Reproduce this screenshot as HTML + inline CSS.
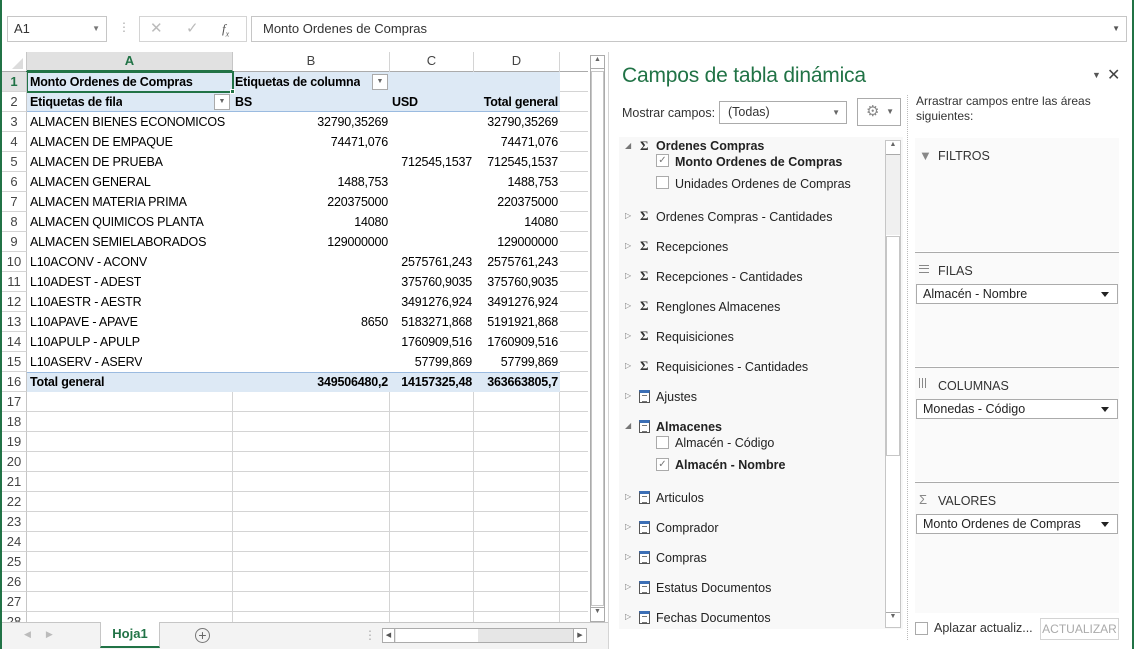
<!DOCTYPE html>
<html><head><meta charset="utf-8"><style>
*{box-sizing:border-box;margin:0;padding:0}
body{width:1134px;height:649px;position:relative;overflow:hidden;background:#fff;font-family:"Liberation Sans",sans-serif;font-size:12.5px;color:#000}
.a{position:absolute}
.c{position:absolute;height:20px;line-height:20px;white-space:nowrap;overflow:hidden;font-size:12.5px;letter-spacing:-0.2px}
.r{text-align:right;padding-right:2px}
.b{font-weight:bold}
.rh{position:absolute;left:0;width:27px;height:20px;line-height:20px;text-align:center;color:#444;font-size:13px;background:#fff;border-bottom:1px solid #d4d4d4;border-right:1px solid #c6c6c6}
.fl{position:absolute;left:640px;font-size:12.5px;color:#222;white-space:nowrap}
.tri{position:absolute;left:625px;font-size:8px;color:#777}
.sig{position:absolute;left:640px;font-size:13px;font-weight:bold;color:#333;font-family:"Liberation Serif",serif}
.doc{position:absolute;left:639px;width:11px;height:13px;border:1px solid #555;border-top:3px solid #3b6fb6;background:#fff}
.doc::after{content:"";position:absolute;left:2px;top:2px;width:5px;height:5px;border-top:1px solid #777;border-bottom:1px solid #777}
.cb{position:absolute;left:656px;width:13px;height:13px;border:1px solid #aaa;background:#fff;font-size:10px;line-height:11px;text-align:center;color:#777}
.ar{position:absolute;left:915px;width:204px;background:#fafafa}
.dd{position:absolute;left:916px;width:202px;height:20px;border:1px solid #ababab;background:#fff;font-size:12.5px;line-height:18px;padding-left:6px;color:#222}
.dd::after{content:"";position:absolute;right:8px;top:7px;border-left:4px solid transparent;border-right:4px solid transparent;border-top:5px solid #222}
.ah{position:absolute;left:938px;font-size:12.5px;color:#333}
</style></head><body>
<div class="a" style="left:0;top:0;width:2px;height:649px;background:#217346"></div>
<div class="a" style="left:1132px;top:0;width:2px;height:649px;background:#217346"></div>
<div class="a" style="left:2px;top:0;width:1130px;height:52px;background:#fff"></div>
<div class="a" style="left:7px;top:16px;width:100px;height:26px;border:1px solid #c6c6c6;font-size:13px;line-height:24px;padding-left:6px;color:#333">A1<span style="position:absolute;right:6px;top:0;font-size:8px;color:#777">▼</span></div>
<div class="a" style="left:118px;top:20px;color:#aaa;font-size:12px">⋮</div>
<div class="a" style="left:139px;top:16px;width:108px;height:26px;border:1px solid #d4d4d4;color:#bbb;font-size:15px;line-height:24px"><span style="position:absolute;left:10px">✕</span><span style="position:absolute;left:46px">✓</span><span style="position:absolute;left:82px;color:#555;font-family:'Liberation Serif',serif;font-style:italic;font-size:13px">f<sub style="font-size:8px">x</sub></span></div>
<div class="a" style="left:251px;top:16px;width:876px;height:26px;border:1px solid #c6c6c6;font-size:13px;line-height:24px;padding-left:11px;color:#333">Monto Ordenes de Compras<span style="position:absolute;right:6px;top:0;font-size:8px;color:#555">▼</span></div>
<div class="a" style="left:2px;top:52px;width:586px;height:20px;background:#fff;border-bottom:1px solid #ababab"></div>
<div class="a" style="left:2px;top:52px;width:25px;height:20px;border-right:1px solid #c6c6c6"></div>
<div class="a" style="left:12px;top:58px;width:0;height:0;border-left:11px solid transparent;border-bottom:11px solid #dcdcdc"></div>
<div class="a" style="left:27px;top:52px;width:206px;height:20px;background:#e1e1e1;border-bottom:2px solid #217346;border-right:1px solid #c6c6c6;text-align:center;line-height:18px;color:#217346;font-weight:bold;font-size:13px">A</div>
<div class="a" style="left:233px;top:52px;width:157px;height:20px;border-right:1px solid #d4d4d4;text-align:center;line-height:18px;color:#444;font-size:13px">B</div>
<div class="a" style="left:390px;top:52px;width:84px;height:20px;border-right:1px solid #d4d4d4;text-align:center;line-height:18px;color:#444;font-size:13px">C</div>
<div class="a" style="left:474px;top:52px;width:86px;height:20px;border-right:1px solid #d4d4d4;text-align:center;line-height:18px;color:#444;font-size:13px">D</div>
<div class="a" style="left:27px;top:72px;width:561px;height:550px;background:
repeating-linear-gradient(to bottom,transparent 0 19px,#d4d4d4 19px 20px),#fff"></div>
<div class="a" style="left:232px;top:392px;width:1px;height:230px;background:#d4d4d4"></div>
<div class="a" style="left:389px;top:392px;width:1px;height:230px;background:#d4d4d4"></div>
<div class="a" style="left:473px;top:392px;width:1px;height:230px;background:#d4d4d4"></div>
<div class="a" style="left:559px;top:72px;width:1px;height:550px;background:#d4d4d4"></div>
<div class="a" style="left:27px;top:72px;width:533px;height:40px;background:#dde9f5;border-bottom:1px solid #9bbbe0"></div>
<div class="a" style="left:27px;top:112px;width:533px;height:260px;background:#fff"></div>
<div class="a" style="left:27px;top:372px;width:533px;height:20px;background:#dde9f5;border-top:1px solid #9bbbe0"></div>
<div class="a" style="left:26px;top:71px;width:208px;height:22px;border:2px solid #217346"></div>
<div class="a" style="left:230px;top:89px;width:5px;height:5px;background:#217346;border:1px solid #fff"></div>
<div class="c b" style="left:30px;top:72px">Monto Ordenes de Compras</div>
<div class="c b" style="left:235px;top:72px">Etiquetas de columna</div>
<div class="a" style="left:372px;top:74px;width:16px;height:16px;border:1px solid #aaa;background:#fff;font-size:7px;text-align:center;line-height:14px;color:#666">▼</div>
<div class="c b" style="left:30px;top:92px">Etiquetas de fila</div>
<div class="a" style="left:214px;top:94px;width:16px;height:16px;border:1px solid #aaa;background:#fff;font-size:7px;text-align:center;line-height:14px;color:#666">▼</div>
<div class="c b" style="left:235px;top:92px">BS</div>
<div class="c b" style="left:392px;top:92px">USD</div>
<div class="c b r" style="left:474px;top:92px;width:86px">Total general</div>
<div id="rows"></div>
<div id="rh"></div>
<script>
var d=[["ALMACEN BIENES ECONOMICOS","32790,35269","","32790,35269"],["ALMACEN DE EMPAQUE","74471,076","","74471,076"],["ALMACEN DE PRUEBA","","712545,1537","712545,1537"],["ALMACEN GENERAL","1488,753","","1488,753"],["ALMACEN MATERIA PRIMA","220375000","","220375000"],["ALMACEN QUIMICOS PLANTA","14080","","14080"],["ALMACEN SEMIELABORADOS","129000000","","129000000"],["L10ACONV - ACONV","","2575761,243","2575761,243"],["L10ADEST - ADEST","","375760,9035","375760,9035"],["L10AESTR - AESTR","","3491276,924","3491276,924"],["L10APAVE - APAVE","8650","5183271,868","5191921,868"],["L10APULP - APULP","","1760909,516","1760909,516"],["L10ASERV - ASERV","","57799,869","57799,869"],["Total general","349506480,2","14157325,48","363663805,7"]];
var h="";d.forEach(function(r,i){var y=112+i*20,b=i==13?" b":"";h+='<div class="c'+b+'" style="left:30px;top:'+y+'px">'+r[0]+'</div><div class="c r'+b+'" style="left:233px;top:'+y+'px;width:157px">'+r[1]+'</div><div class="c r'+b+'" style="left:390px;top:'+y+'px;width:84px">'+r[2]+'</div><div class="c r'+b+'" style="left:474px;top:'+y+'px;width:86px">'+r[3]+'</div>';});
document.getElementById("rows").innerHTML=h;
var g="";for(var i=1;i<=28;i++){var y=72+(i-1)*20;g+='<div class="rh" style="top:'+y+'px;'+(i==1?'background:#e1e1e1;color:#217346;font-weight:bold;':'')+'left:2px;width:25px">'+i+'</div>';}
document.getElementById("rh").innerHTML=g;
</script>
<div class="a" style="left:588px;top:52px;width:20px;height:570px;background:#fff"></div>
<div class="a" style="left:590px;top:55px;width:15px;height:567px;border:1px solid #ababab;background:#fff"></div>
<div class="a" style="left:591px;top:56px;width:13px;height:13px;font-size:7px;text-align:center;color:#666;border-bottom:1px solid #ababab">▲</div>
<div class="a" style="left:591px;top:71px;width:13px;height:535px;border:1px solid #c6c6c6"></div>
<div class="a" style="left:591px;top:607px;width:13px;height:13px;font-size:7px;text-align:center;color:#666;border-top:1px solid #ababab">▼</div>
<div class="a" style="left:2px;top:622px;width:606px;height:27px;background:#f3f3f3;border-top:1px solid #c6c6c6"></div>
<div class="a" style="left:24px;top:629px;font-size:9px;color:#bbb">◀&nbsp;&nbsp;&nbsp;&nbsp;&nbsp;&nbsp;▶</div>
<div class="a" style="left:100px;top:622px;width:60px;height:26px;background:#fff;border-left:1px solid #c6c6c6;border-right:1px solid #c6c6c6;border-bottom:2px solid #217346;text-align:center;line-height:24px;font-weight:bold;color:#217346;font-size:13px">Hoja1</div>
<div class="a" style="left:195px;top:628px;width:15px;height:15px;border:1px solid #777;border-radius:50%;text-align:center;line-height:12px;color:#666;font-size:14px">+</div>
<div class="a" style="left:364px;top:628px;color:#aaa;font-size:12px">⋮</div>
<div class="a" style="left:382px;top:628px;width:205px;height:15px;border:1px solid #ababab;background:#e6e6e6"></div>
<div class="a" style="left:383px;top:629px;width:12px;height:13px;background:#fff;border-right:1px solid #ababab;font-size:7px;line-height:13px;text-align:center;color:#555">◀</div>
<div class="a" style="left:396px;top:629px;width:82px;height:13px;background:#fff"></div>
<div class="a" style="left:573px;top:629px;width:13px;height:13px;background:#fff;border-left:1px solid #ababab;font-size:7px;line-height:13px;text-align:center;color:#555">▶</div>
<div class="a" style="left:608px;top:52px;width:1px;height:597px;background:#d4d4d4"></div>
<div class="a" style="left:609px;top:52px;width:523px;height:597px;background:#fff"></div>
<div class="a" style="left:622px;top:64px;font-size:21px;color:#217346;letter-spacing:-0.2px">Campos de tabla dinámica</div>
<div class="a" style="left:1092px;top:70px;font-size:9px;color:#555">▼</div>
<div class="a" style="left:1107px;top:65px;font-size:16px;color:#444">✕</div>
<div class="a" style="left:622px;top:106px;font-size:12.5px;color:#333">Mostrar campos:</div>
<div class="a" style="left:719px;top:101px;width:128px;height:23px;border:1px solid #ababab;font-size:12.5px;line-height:21px;padding-left:8px;color:#333">(Todas)<span style="position:absolute;right:6px;top:0;font-size:8px;color:#666">▼</span></div>
<div class="a" style="left:857px;top:98px;width:44px;height:28px;border:1px solid #ababab;font-size:15px;line-height:26px;padding-left:8px;color:#888">⚙<span style="position:absolute;right:6px;top:0;font-size:8px;color:#666">▼</span></div>
<div class="a" style="left:916px;top:94px;font-size:12px;color:#333;line-height:15px">Arrastrar campos entre las áreas<br>siguientes:</div>
<div class="a" style="left:907px;top:95px;width:0;height:545px;border-left:1px dotted #bbb"></div>
<div class="a" style="left:619px;top:137px;width:284px;height:492px;background:#f8f8f8"></div>
<div class="a" style="left:885px;top:140px;width:16px;height:488px;border:1px solid #c6c6c6;background:#fff"></div>
<div class="a" style="left:886px;top:141px;width:14px;height:14px;border-bottom:1px solid #aaa;font-size:7px;text-align:center;color:#666">▲</div>
<div class="a" style="left:886px;top:155px;width:14px;height:80px;background:#f0f0f0"></div>
<div class="a" style="left:886px;top:236px;width:14px;height:220px;border:1px solid #c6c6c6;background:#fff"></div>
<div class="a" style="left:886px;top:612px;width:14px;height:14px;border-top:1px solid #aaa;font-size:7px;text-align:center;color:#666">▼</div>
<div class="tri" style="top:141px">◢</div><div class="sig" style="top:138px">Σ</div><div class="fl b" style="left:656px;top:139px">Ordenes Compras</div>
<div class="cb" style="top:154px">✓</div><div class="fl b" style="left:675px;top:155px">Monto Ordenes de Compras</div>
<div class="cb" style="top:176px"></div><div class="fl" style="left:675px;top:177px">Unidades Ordenes de Compras</div>
<div class="tri" style="top:211px">▷</div><div class="sig" style="top:208px">Σ</div><div class="fl" style="left:656px;top:210px">Ordenes Compras - Cantidades</div>
<div class="tri" style="top:241px">▷</div><div class="sig" style="top:238px">Σ</div><div class="fl" style="left:656px;top:240px">Recepciones</div>
<div class="tri" style="top:271px">▷</div><div class="sig" style="top:268px">Σ</div><div class="fl" style="left:656px;top:270px">Recepciones - Cantidades</div>
<div class="tri" style="top:301px">▷</div><div class="sig" style="top:298px">Σ</div><div class="fl" style="left:656px;top:300px">Renglones Almacenes</div>
<div class="tri" style="top:331px">▷</div><div class="sig" style="top:328px">Σ</div><div class="fl" style="left:656px;top:330px">Requisiciones</div>
<div class="tri" style="top:361px">▷</div><div class="sig" style="top:358px">Σ</div><div class="fl" style="left:656px;top:360px">Requisiciones - Cantidades</div>
<div class="tri" style="top:391px">▷</div><div class="doc" style="top:390px"></div><div class="fl" style="left:656px;top:390px">Ajustes</div>
<div class="tri" style="top:421px">◢</div><div class="doc" style="top:420px"></div><div class="fl b" style="left:656px;top:420px">Almacenes</div>
<div class="cb" style="top:436px"></div><div class="fl" style="left:675px;top:436px">Almacén - Código</div>
<div class="cb" style="top:458px">✓</div><div class="fl b" style="left:675px;top:458px">Almacén - Nombre</div>
<div class="tri" style="top:492px">▷</div><div class="doc" style="top:491px"></div><div class="fl" style="left:656px;top:491px">Articulos</div>
<div class="tri" style="top:522px">▷</div><div class="doc" style="top:521px"></div><div class="fl" style="left:656px;top:521px">Comprador</div>
<div class="tri" style="top:552px">▷</div><div class="doc" style="top:551px"></div><div class="fl" style="left:656px;top:551px">Compras</div>
<div class="tri" style="top:582px">▷</div><div class="doc" style="top:581px"></div><div class="fl" style="left:656px;top:581px">Estatus Documentos</div>
<div class="tri" style="top:612px">▷</div><div class="doc" style="top:611px"></div><div class="fl" style="left:656px;top:611px">Fechas Documentos</div>
<div class="ar" style="top:138px;height:113px"></div>
<div class="a" style="left:915px;top:252px;width:204px;height:1px;background:#ababab"></div>
<div class="ar" style="top:253px;height:113px"></div>
<div class="a" style="left:915px;top:367px;width:204px;height:1px;background:#ababab"></div>
<div class="ar" style="top:368px;height:113px"></div>
<div class="a" style="left:915px;top:482px;width:204px;height:1px;background:#ababab"></div>
<div class="ar" style="top:483px;height:130px"></div>
<div class="a" style="left:919px;top:148px;font-size:13px;color:#888">▼</div><div class="ah" style="top:149px">FILTROS</div>
<div class="a" style="left:919px;top:265px;width:10px;height:8px;border-top:1px solid #888;border-bottom:1px solid #888"><div style="margin-top:2px;height:2px;border-top:1px solid #888"></div></div><div class="ah" style="top:264px">FILAS</div>
<div class="a" style="left:919px;top:378px;width:9px;height:10px;background:repeating-linear-gradient(to right,#888 0 1px,transparent 1px 3px)"></div><div class="ah" style="top:379px">COLUMNAS</div>
<div class="a" style="left:919px;top:492px;font-size:13px;color:#888">Σ</div><div class="ah" style="top:494px">VALORES</div>
<div class="dd" style="top:284px">Almacén - Nombre</div>
<div class="dd" style="top:399px">Monedas - Código</div>
<div class="dd" style="top:514px">Monto Ordenes de Compras</div>
<div class="a" style="left:915px;top:622px;width:13px;height:13px;border:1px solid #aaa;background:#fff"></div>
<div class="a" style="left:934px;top:621px;font-size:12.5px;color:#333">Aplazar actualiz...</div>
<div class="a" style="left:1040px;top:618px;width:79px;height:22px;border:1px solid #d4d4d4;font-size:12px;line-height:20px;text-align:center;color:#aaa">ACTUALIZAR</div>
</body></html>
